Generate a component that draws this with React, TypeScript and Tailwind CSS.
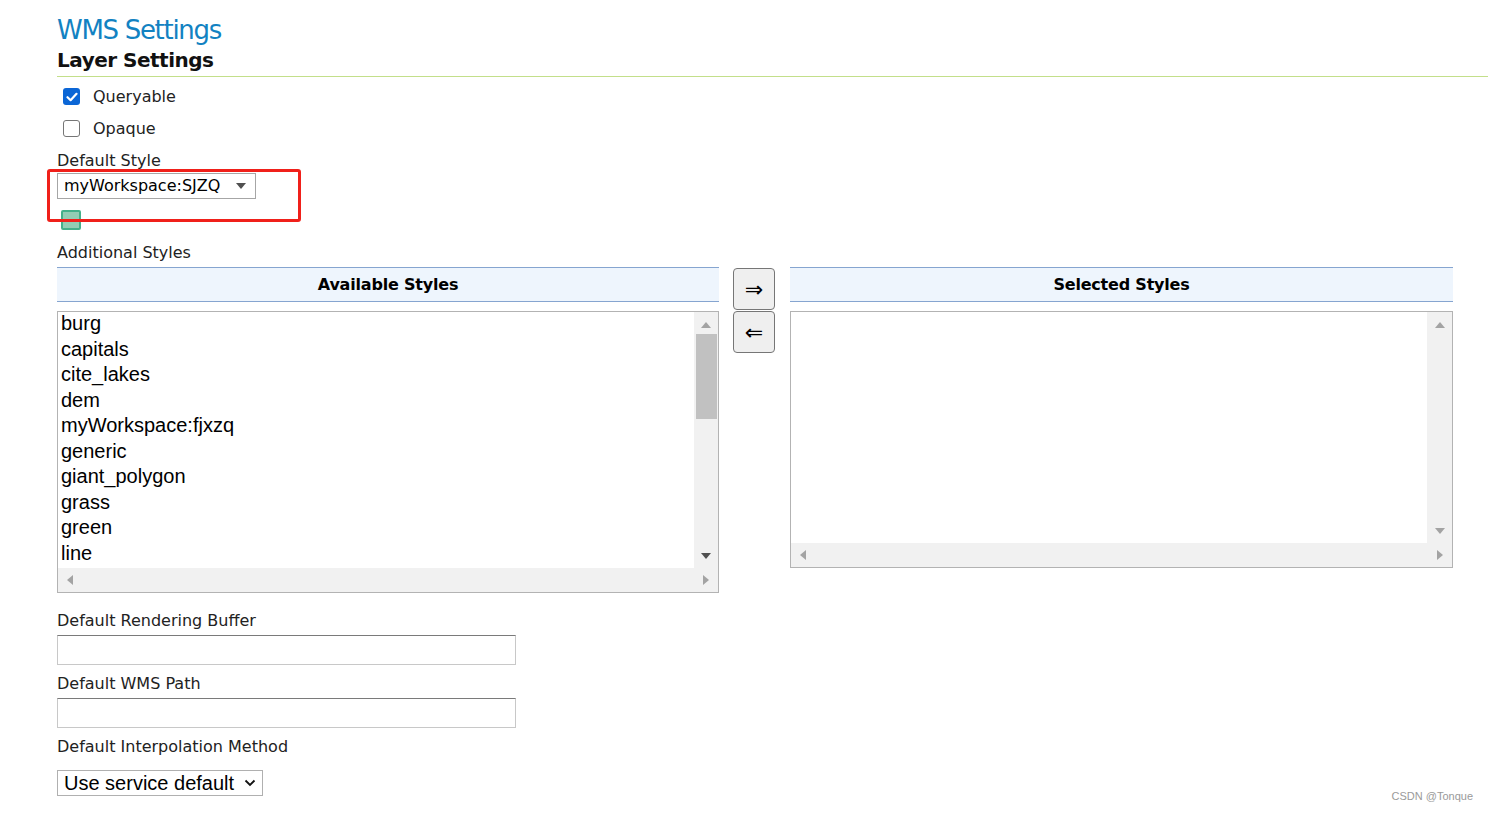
import React from 'react';

const availableStyles = [
  'burg',
  'capitals',
  'cite_lakes',
  'dem',
  'myWorkspace:fjxzq',
  'generic',
  'giant_polygon',
  'grass',
  'green',
  'line',
];

const UpArrow = () => (
  <svg width="10" height="6" viewBox="0 0 10 6"><path d="M0 6 L5 0 L10 6 Z" fill="#a3a3a3" /></svg>
);
const DownArrow = ({ dark }: { dark?: boolean }) => (
  <svg width="10" height="6" viewBox="0 0 10 6"><path d="M0 0 L10 0 L5 6 Z" fill={dark ? '#505050' : '#a3a3a3'} /></svg>
);
const LeftArrow = () => (
  <svg width="6" height="10" viewBox="0 0 6 10"><path d="M6 0 L6 10 L0 5 Z" fill="#a3a3a3" /></svg>
);
const RightArrow = () => (
  <svg width="6" height="10" viewBox="0 0 6 10"><path d="M0 0 L6 5 L0 10 Z" fill="#a3a3a3" /></svg>
);

const Checkbox = ({ checked }: { checked: boolean }) =>
  checked ? (
    <span className="w-[17px] h-[17px] rounded-[3px] bg-[#0b66d6] flex items-center justify-center">
      <svg width="12" height="10" viewBox="0 0 12 10">
        <path d="M1.5 5.2 L4.6 8.2 L10.5 1.8" stroke="white" strokeWidth="2.2" fill="none" strokeLinecap="round" strokeLinejoin="round" />
      </svg>
    </span>
  ) : (
    <span className="w-[17px] h-[17px] rounded-[3px] border-[1.5px] border-[#767676] bg-white" />
  );

const PanelHeader = ({ title }: { title: string }) => (
  <div className="h-[35px] border-y border-[#86a5d0] bg-[#eef5fd] flex items-center justify-center font-bold text-[16px] tracking-[-0.2px] text-black">
    {title}
  </div>
);

// fake native scrollbar bits for the two list boxes
const HScroll = () => (
  <div className="h-[24px] bg-[#f1f1f1] flex items-center justify-between px-[9px]">
    <LeftArrow />
    <RightArrow />
  </div>
);

export default function App() {
  return (
    <div className="relative min-h-[813px] bg-white text-[#222] font-['DejaVu_Sans',sans-serif] overflow-hidden">
      <div className="pl-[57px] pt-[13px]">
        <h1 className="text-[26px] leading-[34px] text-[#1282c2] tracking-[-1.3px]">WMS Settings</h1>
        <div className="border-b border-[#c3df8a] pb-[3px]">
          <h2 className="text-[20px] leading-[26px] font-bold text-[#111] tracking-[-0.5px]">Layer Settings</h2>
        </div>

        <div className="pl-[6px] pt-[11px] flex flex-col gap-[15px] text-[16px]">
          <label className="flex items-center gap-[13px] h-[17px]">
            <Checkbox checked />
            <span>Queryable</span>
          </label>
          <label className="flex items-center gap-[13px] h-[17px]">
            <Checkbox checked={false} />
            <span>Opaque</span>
          </label>
        </div>

        <div className="mt-[13px] text-[16px] leading-[22px]">Default Style</div>
        <div className="mt-[1px] w-[199px] h-[26px] border border-[#a6a6a6] flex items-center justify-between pl-[6px] pr-[9px] text-[16px] text-black">
          <span>myWorkspace:SJZQ</span>
          <DownArrow dark />
        </div>
        <div className="mt-[11px] ml-[4px] w-[20px] h-[20px] border-2 border-[#44b08a] bg-[#93cdb4] rounded-[2px]" />

        <div className="mt-[12px] text-[16px] leading-[22px]">Additional Styles</div>

        <div className="mt-[3px] flex items-start">
          {/* Available */}
          <div className="w-[662px]">
            <PanelHeader title="Available Styles" />
            <div className="mt-[9px] h-[282px] border border-[#b3b3b3] flex flex-col">
              <div className="flex flex-1 min-h-0">
                <div className="flex-1 pl-[3px] -mt-[1px] font-['Liberation_Sans',sans-serif] text-[20px] leading-[25.5px] text-black overflow-hidden">
                  {availableStyles.map((s) => (
                    <div key={s}>{s}</div>
                  ))}
                </div>
                <div className="w-[24px] bg-[#f1f1f1] flex flex-col items-center pt-[10px] pb-[9px]">
                  <UpArrow />
                  <div className="mt-[6px] w-[21px] h-[85px] bg-[#c1c1c1]" />
                  <div className="flex-1" />
                  <DownArrow dark />
                </div>
              </div>
              <HScroll />
            </div>
          </div>

          {/* Buttons */}
          <div className="ml-[14px] mt-[1px] flex flex-col gap-[1px]">
            <button className="w-[42px] h-[42px] rounded-[4px] border border-[#767676] bg-[#efefef] text-[22px] text-black flex items-center justify-center">⇒</button>
            <button className="w-[42px] h-[42px] rounded-[4px] border border-[#767676] bg-[#efefef] text-[22px] text-black flex items-center justify-center">⇐</button>
          </div>

          {/* Selected */}
          <div className="ml-[15px] w-[663px]">
            <PanelHeader title="Selected Styles" />
            <div className="mt-[9px] h-[257px] border border-[#b3b3b3] flex flex-col">
              <div className="flex flex-1 min-h-0">
                <div className="flex-1 bg-white" />
                <div className="w-[25px] bg-[#f1f1f1] flex flex-col items-center pt-[10px] pb-[9px]">
                  <UpArrow />
                  <div className="flex-1" />
                  <DownArrow />
                </div>
              </div>
              <HScroll />
            </div>
          </div>
        </div>

        <div className="mt-[17px] text-[16px] leading-[22px]">Default Rendering Buffer</div>
        <div className="mt-[3px] w-[459px] h-[30px] border border-[#c8c8c8] border-t-[#7a7a7a]" />
        <div className="mt-[8px] text-[16px] leading-[22px]">Default WMS Path</div>
        <div className="mt-[3px] w-[459px] h-[30px] border border-[#c8c8c8] border-t-[#7a7a7a]" />
        <div className="mt-[8px] text-[16px] leading-[22px]">Default Interpolation Method</div>
        <div className="mt-[12px] w-[206px] h-[26px] border border-[#b0b0b0] flex items-center justify-between pl-[6px] pr-[6px] font-['Liberation_Sans',sans-serif] text-[20px] text-black">
          <span>Use service default</span>
          <svg width="12" height="8" viewBox="0 0 12 8"><path d="M1.5 1.5 L6 6 L10.5 1.5" stroke="#111" strokeWidth="1.8" fill="none" /></svg>
        </div>
      </div>

      {/* annotation box */}
      <div className="absolute left-[47px] top-[169px] w-[254px] h-[53px] border-[3px] border-[#f0201a] rounded-[3px] pointer-events-none" />

      <div className="absolute right-[15px] bottom-[9px] text-[11px] text-[#9a9a9a] font-['Liberation_Sans',sans-serif]">CSDN @Tonque</div>
    </div>
  );
}
